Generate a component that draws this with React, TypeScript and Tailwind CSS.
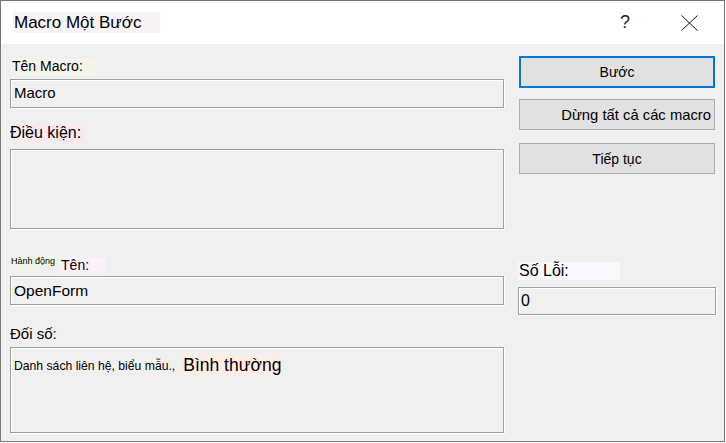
const boxCls =
  "border border-[#a0a0a0] bg-[#f0f0f0] shadow-[inset_1px_1px_0_#ffffff,1px_1px_0_#ffffff]";

const btnCls = "flex h-[31px] w-[196px] ml-[1px] items-center bg-[#e1e1e1] leading-[16px] text-black";

export default function App() {
  return (
    <div className="h-[443px] w-[726px] bg-white font-['Liberation_Sans',Arial,sans-serif] text-black">
      <div className="flex h-[442px] w-[725px] flex-col border border-[#777777] bg-[#f0f0f0]">
        {/* barra de título */}
        <div className="flex h-[43px] shrink-0 items-center bg-white">
          <span className="ml-[12px] mt-[-1px] bg-[#f8f4f5] px-[1px] pr-[19px] text-[17px] leading-[21px]">
            Macro Một Bước
          </span>
          <span className="ml-auto mr-[51px] mt-[-2px] text-[18px] font-light leading-[20px] text-[#222]">?</span>
          <svg className="mr-[26px]" width="17" height="16" viewBox="0 0 17 16" fill="none">
            <path d="M0.5 0.5 L16.5 15.5 M16.5 0.5 L0.5 15.5" stroke="#111" strokeWidth="1" />
          </svg>
        </div>

        <div className="flex flex-1">
          {/* columna izquierda */}
          <div className="ml-[9px] flex w-[494px] flex-col">
            <div className="mt-[14px] self-start bg-[#f6f4ea] pl-[2px] pr-[14px] text-[14px] leading-[16px]">
              Tên Macro:
            </div>
            <div className={`mt-[5px] flex h-[29px] items-center pl-[3px] text-[15px] ${boxCls}`}>Macro</div>

            <div className="mt-[16px] self-start bg-[#fbe9ee] pr-[4px] text-[16px] leading-[18px]">Điều kiện:</div>
            <div className={`mt-[7px] h-[80px] ${boxCls}`}></div>

            <div className="mt-[28px] flex items-start">
              <span className="ml-[1px] mt-[-1px] bg-[#edf6e3] pr-[5px] text-[9px] leading-[11px]">Hành động</span>
              <span className="bg-[#fbf1f8] pl-[1px] pr-[17px] text-[14px] leading-[16px]">Tên:</span>
            </div>
            <div className={`mt-[3px] flex h-[29px] items-center pl-[3px] text-[15.5px] ${boxCls}`}>OpenForm</div>

            <div className="mt-[20px] self-start pr-[30px] text-[15px] leading-[17px]">Đối số:</div>
            <div className={`mt-[5px] h-[86px] pl-[3px] pt-[7px] ${boxCls}`}>
              <div className="flex items-end">
                <span className="mb-[2px] text-[12.2px] leading-[14px]">Danh sách liên hệ, biểu mẫu.,</span>
                <span className="ml-[8px] bg-[#fdeee4] pr-[1px] text-[17.5px] leading-[20px]">Bình thường</span>
              </div>
            </div>
          </div>

          {/* columna derecha */}
          <div className="ml-[14px] flex w-[198px] flex-col">
            <button className={`${btnCls} mt-[12px] h-[32px] justify-center border-2 border-[#0078d7] text-[14px]`}>
              Bước
            </button>
            <button className={`${btnCls} mt-[11px] justify-end border border-[#adadad] pr-[3px] text-[14.8px]`}>
              Dừng tất cả các macro
            </button>
            <button className={`${btnCls} mt-[13px] justify-center border border-[#adadad] text-[14px]`}>
              Tiếp tục
            </button>

            <div className="mt-[88px] w-[102px] bg-[#f8f8fe] pl-[1px] text-[16px] leading-[18px]">Số Lỗi:</div>
            <div className={`mt-[7px] flex h-[28px] items-center pl-[2px] text-[16px] ${boxCls}`}>0</div>
          </div>
        </div>
      </div>
    </div>
  );
}
